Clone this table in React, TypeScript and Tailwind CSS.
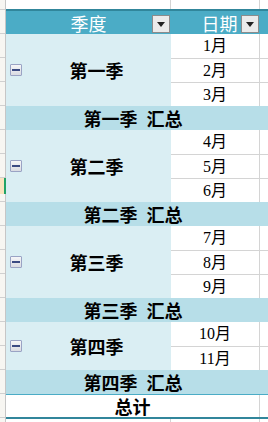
import React from "react";

const quarters = [
  { name: "第一季", months: ["1月", "2月", "3月"] },
  { name: "第二季", months: ["4月", "5月", "6月"] },
  { name: "第三季", months: ["7月", "8月", "9月"] },
  { name: "第四季", months: ["10月", "11月"] },
];

const serif = "font-['Liberation_Serif','Noto_Sans_CJK_SC',serif]";

function Dropdown() {
  return (
    <div className="absolute right-[1px] bottom-[1px] w-[18px] h-[18px] border border-[#8c8c8c] bg-[#ebebeb] flex items-center justify-center">
      <svg width="8" height="5" viewBox="0 0 8 5">
        <polygon points="0,0 8,0 4,5" fill="#222" />
      </svg>
    </div>
  );
}

function Minus() {
  return (
    <div className="ml-[4px] w-[12px] h-[12px] shrink-0 rounded-[1px] border border-[#9aa3c4] bg-gradient-to-b from-[#f6f6f8] to-[#d9dbe2] flex items-center justify-center">
      <div className="w-[8px] h-[2px] bg-[#3a4a82]" />
    </div>
  );
}

function Strip() {
  const rows: { h: string; sel?: boolean }[] = [];
  rows.push({ h: "h-[10px]" });
  rows.push({ h: "h-[24px]" });
  for (let i = 0; i < 16; i++) rows.push({ h: "h-[24px]", sel: i === 6 });
  return (
    <div className="w-[6px] shrink-0 flex flex-col bg-[#f7f6f2] border-r border-[#c6c6c6]">
      {rows.map((r, i) => (
        <div key={i} className={`${r.h} border-b border-[#d0d0d0] relative`}>
          {r.sel && (
            <div className="absolute left-0 right-[-1px] top-0 h-[16px] flex">
              <div className="flex-1 bg-[#f9e4bf]" />
              <div className="w-[2px] bg-[#21a366]" />
            </div>
          )}
        </div>
      ))}
      <div className="flex-1" />
    </div>
  );
}

export default function App() {
  return (
    <div className="w-[268px] h-[422px] overflow-hidden bg-white flex font-['Noto_Sans_CJK_SC',sans-serif] text-black">
      <Strip />
      <div className="flex-1 flex flex-col">
        {/* top row */}
        <div className="h-[9px] flex shrink-0">
          <div className="w-[165px] border-r border-[#d4d4d4]" />
          <div className="w-[89px] border-r border-[#d4d4d4]" />
          <div className="flex-1" />
        </div>
        {/* header */}
        <div className="h-[25px] shrink-0 flex border-t-2 border-[#31869b] bg-[#4bacc6] text-white text-[18px] leading-none">
          <div className="w-[165px] relative flex items-center justify-center">
            <span>季度</span>
            <Dropdown />
          </div>
          <div className="w-[89px] relative flex items-center justify-center pl-[8px]">
            <span>日期</span>
            <Dropdown />
          </div>
          <div className="flex-1" />
        </div>
        {quarters.map((q) => (
          <React.Fragment key={q.name}>
            <div className="flex shrink-0">
              <div className="w-[165px] bg-[#daeef3] flex items-center">
                <Minus />
                <div className="flex-1 text-center font-bold text-[18px] leading-none">{q.name}</div>
              </div>
              <div className="flex-1 flex flex-col">
                {q.months.map((m, i) => (
                  <div
                    key={m}
                    className={`h-[24px] flex ${i > 0 ? "border-t border-[#d4d4d4]" : ""}`}
                  >
                    <div className={`w-[89px] border-r border-[#d4d4d4] flex items-center justify-center text-[16px] leading-none ${serif}`}>
                      {m}
                    </div>
                    <div className="flex-1" />
                  </div>
                ))}
              </div>
            </div>
            <div className="h-[24px] shrink-0 flex bg-[#b7dee8]">
              <div className="w-[254px] flex items-center justify-center gap-[9px] font-bold text-[18px] leading-none">
                <span>{q.name}</span>
                <span>汇总</span>
              </div>
            </div>
          </React.Fragment>
        ))}
        {/* total */}
        <div className="h-[25px] shrink-0 flex border-t border-b-2 border-t-[#4bacc6] border-b-[#31869b]">
          <div className="w-[254px] border-r border-[#d4d4d4] flex items-center justify-center font-bold text-[18px] leading-none">
            总计
          </div>
          <div className="flex-1" />
        </div>
        <div className="flex-1 flex">
          <div className="w-[165px] border-r border-[#d4d4d4]" />
          <div className="w-[89px] border-r border-[#d4d4d4]" />
          <div className="flex-1" />
        </div>
      </div>
    </div>
  );
}
